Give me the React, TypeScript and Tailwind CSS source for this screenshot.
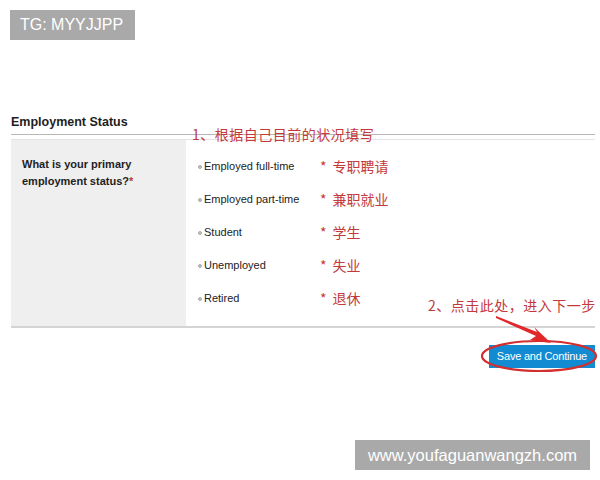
import React from "react";

const options = [
  { label: "Employed full-time", note: "专职聘请" },
  { label: "Employed part-time", note: "兼职就业" },
  { label: "Student", note: "学生" },
  { label: "Unemployed", note: "失业" },
  { label: "Retired", note: "退休" },
];

const cjk = "font-['Noto_Sans_CJK_SC','Noto_Sans',sans-serif]";

export default function App() {
  return (
    <div className="relative w-[600px] h-[480px] bg-white overflow-hidden font-['Liberation_Sans',Arial,sans-serif]">
      {/* top watermark */}
      <div className="ml-[10px] mt-[10px] w-[125px] h-[30px] bg-[#a9a9a9] text-white text-[16px] leading-[30px] pl-[10px]">
        TG: MYYJJPP
      </div>

      <div className="mt-[74px] ml-[11px] mr-[5px] relative">
        <h2 className="text-[12.5px] font-bold text-[#1e1e1e] leading-[16px]">Employment Status</h2>
        <div className="mt-[4px] h-[1px] bg-[#b8b8b8]" />
        <div className="mt-[4px] h-[1px] bg-[#e4e4e4]" />

        <div className="flex border-b-2 border-[#d4d4d4]">
          <div className="w-[175px] bg-[#efefef] pt-[16px] pl-[11px] text-[11px] font-bold leading-[17px] text-[#1e1e1e]">
            What is your primary
            <br />
            employment status?<span className="text-[#c0392b]">*</span>
          </div>
          <div className="flex-1 pt-[10px] pb-[11px] pl-[12px]">
            {options.map((o) => (
              <div key={o.label} className="h-[33px] flex items-center">
                <span className="w-[122px] flex items-center text-[11px] text-[#222]">
                  <span className="w-[4px] h-[4px] rounded-full bg-[#c4c4c4] border border-[#aaa] mr-[2px]" />
                  {o.label}
                </span>
                <span className={`text-[14px] text-[#c4393c] ${cjk}`}>
                  <span className="mr-[6px]">*</span>
                  {o.note}
                </span>
              </div>
            ))}
          </div>
        </div>

        <div className="flex justify-end mt-[17px]">
          <button className="h-[23px] px-[8px] bg-[#138bd2] text-white text-[11px] tracking-[-0.2px]">
            Save and Continue
          </button>
        </div>

        {/* annotations */}
        <div className={`absolute left-[181px] top-[10px] whitespace-nowrap text-[14px] leading-[20px] tracking-[0.5px] text-[#c4393c] ${cjk}`}>
          1、根据自己目前的状况填写
        </div>
        <div className={`absolute left-[417px] top-[181px] whitespace-nowrap text-[14px] leading-[20px] tracking-[0.5px] text-[#c4393c] ${cjk}`}>
          2、点击此处，进入下一步
        </div>
      </div>

      <svg className="absolute left-0 top-0 pointer-events-none" width="600" height="480">
        <ellipse cx="539" cy="356" rx="57" ry="15" fill="none" stroke="#d32f2f" strokeWidth="2.2" />
        <path d="M496 316 L537 332 L534 327 L551 343 L530 340 L536 336 L496 318 Z" fill="#e0282a" />
      </svg>

      {/* bottom watermark */}
      <div className="absolute left-[355px] top-[440px] w-[235px] h-[30px] bg-[#a9a9a9] text-white text-[16.5px] leading-[30px] text-center">
        www.youfaguanwangzh.com
      </div>
    </div>
  );
}
